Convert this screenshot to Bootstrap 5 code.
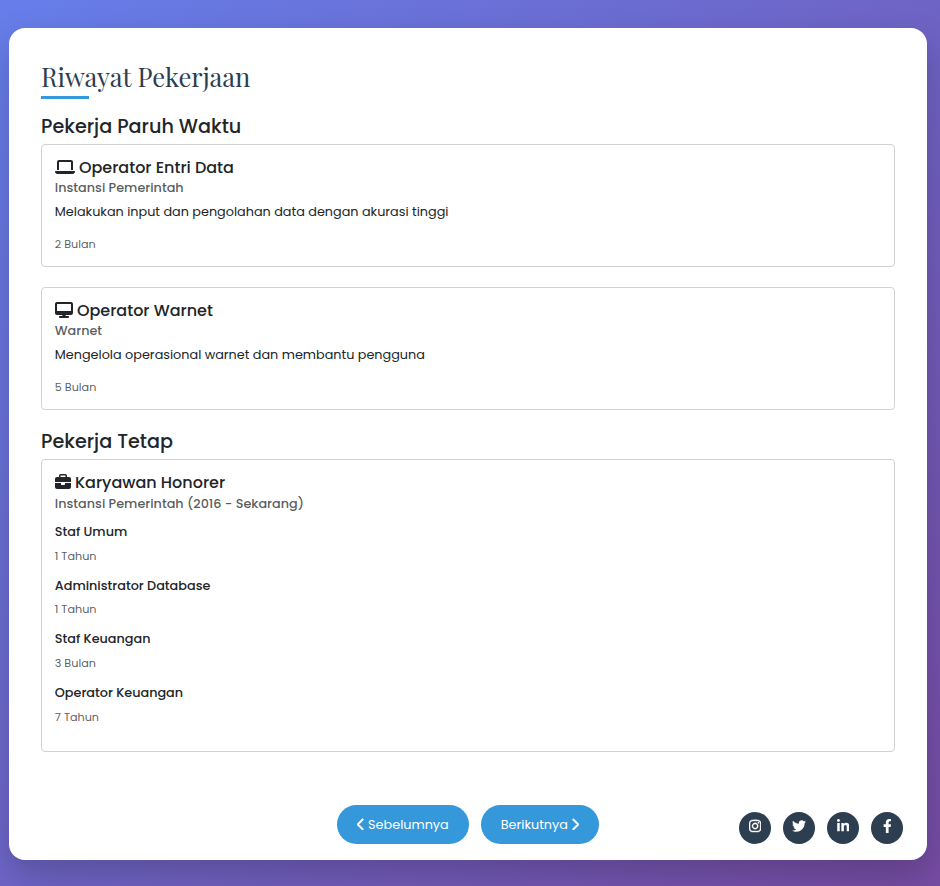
<!DOCTYPE html>
<html lang="id">
<head>
<meta charset="utf-8">
<meta name="viewport" content="width=device-width, initial-scale=1">
<title>Riwayat Pekerjaan</title>
<link rel="stylesheet" href="https://cdn.jsdelivr.net/npm/bootstrap@5.3.0/dist/css/bootstrap.min.css">
<style>
body{min-height:886px;overflow:hidden;font-family:Poppins,Inter,"Open Sans",sans-serif;color:#212529;background:linear-gradient(135deg,#667eea 0%,#764ba2 100%)}
.page-shell{padding:28px 13px 26px 9px}
.sheet{height:832px;border-radius:16px;padding:33px 32px 16px;box-shadow:0 15px 35px rgba(0,0,0,.2)}
.sheet-title{font:400 25.6px/1.2 "Playfair Display","Liberation Serif",serif;letter-spacing:-.03px;color:#2c3e50;margin-bottom:4px}
.title-rule{width:48px;height:3px;background:#3498db;margin-bottom:16px}
.group-title{font-size:19.2px;font-weight:500;line-height:1.2;margin-bottom:6.4px}
.job{border:1px solid #d0d2d4;border-radius:4px;padding:12.8px;margin-bottom:20px}
.job-title{font-size:16px;font-weight:500;line-height:1.2;margin-bottom:3.2px}
.job-title svg{height:16px;vertical-align:-2px}
.employer{font-size:12.8px;font-weight:500;line-height:1.2;color:rgba(33,37,41,.75);margin-bottom:6.4px}
.desc{font-size:12.8px;line-height:1.5;margin-bottom:12.8px}
.duration{font-size:11.2px;line-height:21.2px;margin-bottom:-2px;color:rgba(33,37,41,.75)}
.role{font-size:12.8px;font-weight:500;line-height:1.2;margin-bottom:6.4px}
.role-block{padding-bottom:12.8px}
.role-list{padding-top:6.6px;margin-bottom:-.6px}
.footer-bar{display:grid;grid-template-columns:1fr auto 1fr;margin:auto -8px 0}
.bar-group{gap:12px}
.pill,.pill:hover{height:39px;border:0;border-radius:20px;background:#3498db;color:#fff;font-size:12.8px;line-height:19.2px;padding:0 20px}
.pill svg{height:12.8px;vertical-align:-1.6px}
.social,.social:hover{width:32px;height:32px;background:#2c3e50;color:#fff;padding-bottom:4px}
.social svg{height:14px}
</style>
<script src="https://cdn.jsdelivr.net/npm/bootstrap@5.3.0/dist/js/bootstrap.bundle.min.js"></script>
</head>
<body>
<main class="page-shell">
<section class="sheet bg-white d-flex flex-column">
  <h1 class="sheet-title">Riwayat Pekerjaan</h1>
  <div class="title-rule"></div>

  <h2 class="group-title">Pekerja Paruh Waktu</h2>
  <article class="job">
    <h3 class="job-title"><svg viewBox="0 0 640 512" fill="currentColor" aria-hidden="true"><path d="M128 32C92.700 32 64 60.700 64 96V352h64V96H512V352h64V96c0-35.300-28.700-64-64-64H128zM19.200 384C8.600 384 0 392.600 0 403.200C0 445.600 34.400 480 76.800 480H563.200c42.400 0 76.800-34.400 76.800-76.800c0-10.600-8.600-19.200-19.200-19.200H19.200z"/></svg> Operator Entri Data</h3>
    <h4 class="employer">Instansi Pemerintah</h4>
    <p class="desc">Melakukan input dan pengolahan data dengan akurasi tinggi</p>
    <div class="duration">2 Bulan</div>
  </article>
  <article class="job">
    <h3 class="job-title"><svg viewBox="0 0 576 512" fill="currentColor" aria-hidden="true"><path d="M64 0C28.700 0 0 28.700 0 64V352c0 35.300 28.700 64 64 64H240l-10.700 32H160c-17.700 0-32 14.300-32 32s14.300 32 32 32H416c17.700 0 32-14.300 32-32s-14.300-32-32-32H346.700L336 416H512c35.300 0 64-28.700 64-64V64c0-35.300-28.700-64-64-64H64zM512 64V288H64V64H512z"/></svg> Operator Warnet</h3>
    <h4 class="employer">Warnet</h4>
    <p class="desc">Mengelola operasional warnet dan membantu pengguna</p>
    <div class="duration">5 Bulan</div>
  </article>

  <h2 class="group-title">Pekerja Tetap</h2>
  <article class="job mb-0">
    <h3 class="job-title"><svg viewBox="0 0 512 512" fill="currentColor" aria-hidden="true"><path d="M184 48H328c4.400 0 8 3.600 8 8V96H176V56c0-4.400 3.600-8 8-8zm-56 8V96H64C28.700 96 0 124.700 0 160v96H192 320 512V160c0-35.300-28.700-64-64-64H384V56c0-30.900-25.100-56-56-56H184c-30.900 0-56 25.100-56 56zM512 288H320v32c0 17.700-14.300 32-32 32H224c-17.700 0-32-14.300-32-32V288H0V416c0 35.300 28.700 64 64 64H448c35.300 0 64-28.700 64-64V288z"/></svg> Karyawan Honorer</h3>
    <h4 class="employer">Instansi Pemerintah (2016 - Sekarang)</h4>
    <div class="role-list">
      <div class="role-block"><h5 class="role">Staf Umum</h5><div class="duration">1 Tahun</div></div>
      <div class="role-block"><h5 class="role">Administrator Database</h5><div class="duration">1 Tahun</div></div>
      <div class="role-block"><h5 class="role">Staf Keuangan</h5><div class="duration">3 Bulan</div></div>
      <div class="role-block"><h5 class="role">Operator Keuangan</h5><div class="duration">7 Tahun</div></div>
    </div>
  </article>

  <footer class="footer-bar align-items-end">
    <div></div>
    <nav class="bar-group d-flex" aria-label="Navigasi halaman">
      <button class="btn pill" type="button"><svg viewBox="0 0 320 512" fill="currentColor" aria-hidden="true"><path d="M9.400 233.400c-12.500 12.500-12.500 32.800 0 45.300l192 192c12.500 12.500 32.800 12.500 45.300 0s12.500-32.800 0-45.300L77.300 256 246.600 86.600c12.500-12.500 12.500-32.800 0-45.300s-32.800-12.500-45.300 0l-192 192z" stroke="currentColor" stroke-width="22"/></svg> Sebelumnya</button>
      <button class="btn pill" type="button">Berikutnya <svg viewBox="0 0 320 512" fill="currentColor" aria-hidden="true"><path d="M310.600 233.400c12.500 12.500 12.500 32.800 0 45.300l-192 192c-12.500 12.500-32.800 12.500-45.300 0s-12.500-32.800 0-45.300L242.700 256 73.400 86.600c-12.500-12.500-12.500-32.800 0-45.300s32.800-12.500 45.300 0l192 192z" stroke="currentColor" stroke-width="22"/></svg></button>
    </nav>
    <div class="bar-group d-flex justify-content-end">
      <a href="#" aria-label="Instagram" class="social rounded-circle d-flex align-items-center justify-content-center"><svg viewBox="0 0 448 512" fill="currentColor" stroke="currentColor" stroke-width="14"><path d="M224.100 141c-63.600 0-114.900 51.300-114.900 114.900s51.300 114.900 114.900 114.900S339 319.500 339 255.900 287.700 141 224.100 141zm0 189.600c-41.100 0-74.700-33.500-74.700-74.700s33.500-74.700 74.700-74.700 74.700 33.500 74.700 74.700-33.600 74.700-74.700 74.700zm146.400-194.300c0 14.900-12 26.800-26.800 26.800-14.900 0-26.800-12-26.800-26.800s12-26.800 26.800-26.800 26.800 12 26.800 26.800zm76.100 27.200c-1.700-35.900-9.900-67.700-36.200-93.900-26.200-26.200-58-34.400-93.900-36.200-37-2.100-147.900-2.100-184.900 0-35.800 1.700-67.600 9.900-93.900 36.100s-34.400 58-36.200 93.900c-2.100 37-2.100 147.900 0 184.900 1.700 35.900 9.900 67.700 36.200 93.900s58 34.400 93.900 36.200c37 2.100 147.900 2.100 184.900 0 35.900-1.700 67.700-9.900 93.900-36.200 26.200-26.200 34.400-58 36.200-93.900 2.100-37 2.100-147.800 0-184.800zM398.800 388c-7.800 19.600-22.900 34.700-42.600 42.600-29.500 11.700-99.500 9-132.100 9s-102.700 2.600-132.100-9c-19.600-7.800-34.700-22.900-42.600-42.600-11.700-29.500-9-99.500-9-132.100s-2.600-102.700 9-132.100c7.800-19.600 22.900-34.700 42.600-42.600 29.500-11.700 99.500-9 132.100-9s102.700-2.600 132.100 9c19.600 7.800 34.700 22.900 42.600 42.600 11.700 29.500 9 99.500 9 132.100s2.700 102.700-9 132.100z"/></svg></a>
      <a href="#" aria-label="Twitter" class="social rounded-circle d-flex align-items-center justify-content-center"><svg viewBox="0 0 512 512" fill="currentColor"><path d="M459.370 151.716c.325 4.548.325 9.097.325 13.645 0 138.720-105.583 298.558-298.558 298.558-59.452 0-114.680-17.219-161.137-47.106 8.447.974 16.568 1.299 25.340 1.299 49.055 0 94.213-16.568 130.274-44.832-46.132-.975-84.792-31.188-98.112-72.772 6.498.974 12.995 1.624 19.818 1.624 9.421 0 18.843-1.300 27.614-3.573-48.081-9.747-84.143-51.980-84.143-102.985v-1.299c13.969 7.797 30.214 12.670 47.431 13.319-28.264-18.843-46.781-51.005-46.781-87.391 0-19.492 5.197-37.360 14.294-52.954 51.655 63.675 129.300 105.258 216.365 109.807-1.624-7.797-2.599-15.918-2.599-24.040 0-57.828 46.782-104.934 104.934-104.934 30.213 0 57.502 12.670 76.670 33.137 23.715-4.548 46.456-13.320 66.599-25.340-7.798 24.366-24.366 44.833-46.132 57.827 21.117-2.273 41.584-8.122 60.426-16.243-14.292 20.791-32.161 39.308-52.628 54.253z"/></svg></a>
      <a href="#" aria-label="LinkedIn" class="social rounded-circle d-flex align-items-center justify-content-center"><svg viewBox="0 0 448 512" fill="currentColor"><path d="M100.280 448H7.400V148.900h92.880zM53.790 108.100C24.090 108.100 0 83.500 0 53.800a53.790 53.790 0 0 1 107.580 0c0 29.700-24.100 54.300-53.790 54.300zM447.900 448h-92.680V302.400c0-34.700-.7-79.200-48.290-79.200-48.290 0-55.690 37.700-55.690 76.700V448h-92.780V148.900h89.080v40.800h1.300c12.400-23.500 42.690-48.300 87.880-48.300 94 0 111.280 61.900 111.280 142.300V448z"/></svg></a>
      <a href="#" aria-label="Facebook" class="social rounded-circle d-flex align-items-center justify-content-center"><svg viewBox="0 0 320 512" fill="currentColor"><path d="M279.140 288l14.220-92.660h-88.910v-60.130c0-25.350 12.420-50.060 52.240-50.060h40.420V6.260S260.430 0 225.360 0c-73.220 0-121.080 44.380-121.080 124.720v70.620H22.890V288h81.390v224h100.170V288z"/></svg></a>
    </div>
  </footer>
</section>
</main>
</body>
</html>
